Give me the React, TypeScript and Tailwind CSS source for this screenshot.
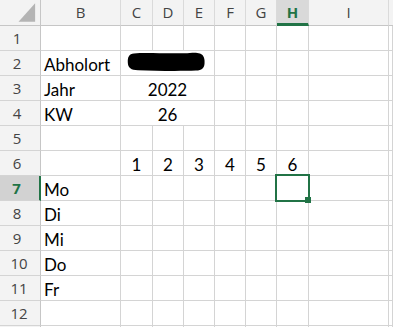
const cols = ["B", "C", "D", "E", "F", "G", "H", "I"];

const grid = "border-r border-b border-[#d4d4d4]";
const head = "border-r border-b border-[#dadada] bg-[#f3f3f3] text-[#444444]";

function RowHead({ n, active, hideLabel }: { n: number; active?: boolean; hideLabel?: boolean }) {
  return (
    <div
      className={`flex h-[25px] items-center justify-center border-b border-[#d4d4d4] font-['Open_Sans',sans-serif] text-[15px] leading-[24px] ${
        n < 10 ? "pr-[6px]" : "pr-[2px]"
      } ${
        active
          ? "border-r-2 border-r-[#217346] bg-[#d2d2d2] font-bold text-[#217346]"
          : "border-r border-r-[#c6c6c6] bg-[#f3f3f3] text-[#444444]"
      }`}
    >
      {hideLabel ? "" : n}
    </div>
  );
}

function Blank({ span }: { span?: number }) {
  return <div className={`${grid} ${span === 3 ? "col-span-3" : ""}`} />;
}

function Scribble() {
  return (
    <svg width="80" height="22" viewBox="0 0 80 22" className="ml-[5px]">
      <path
        d="M8 2.5 C20 1.5 40 2.8 58 2.2 C66 1.8 70 1 74 2.5 C78 4 79 8 78.5 13 C78 17 76 19.5 70 19.6 C55 20.2 30 20 12 19.2 C5 19 2 17 1.8 11.5 C1.6 6 3 3 8 2.5 Z"
        fill="#000"
      />
    </svg>
  );
}

export default function App() {
  const days = ["Mo", "Di", "Mi", "Do", "Fr"];

  return (
    <div className="relative h-[327px] w-[393px] overflow-hidden bg-white font-['Lato',sans-serif] text-[17px] leading-[28px] text-black">
      <div className="grid grid-cols-[41px_80px_32px_31px_31px_31px_31px_32px_80px_1fr] grid-rows-[26px_repeat(13,25px)]">
        {/* column headers */}
        <div className="flex border-r border-b border-[#c6c6c6] bg-[#f3f3f3]">
          <svg width="41" height="25" viewBox="0 0 41 25">
            <polygon points="36,3 36,22 19,22" fill="#b4b4b4" />
          </svg>
        </div>
        {cols.map((c) =>
          c === "H" ? (
            <div
              key={c}
              className="flex items-start justify-center border-r border-[#dadada] border-b-[3px] border-b-[#217346] bg-[#d9d9d9] font-['Open_Sans',sans-serif] text-[15px] font-bold leading-[25px] text-[#217346]"
            >
              {c}
            </div>
          ) : (
            <div
              key={c}
              className={`flex items-start justify-center ${head} border-b-[#c6c6c6] font-['Open_Sans',sans-serif] text-[15px] leading-[25px]`}
            >
              {c}
            </div>
          ),
        )}
        <div className="border-b border-[#c6c6c6] bg-[#f3f3f3]" />

        {/* row 1 */}
        <RowHead n={1} />
        {cols.map((c) => (
          <Blank key={c} />
        ))}
        <Blank />

        {/* row 2 */}
        <RowHead n={2} />
        <div className={`${grid} pl-[3px]`}>Abholort</div>
        <div className={`${grid} col-span-3 flex`}>
          <Scribble />
        </div>
        <Blank />
        <Blank />
        <Blank />
        <Blank />
        <Blank />

        {/* row 3 */}
        <RowHead n={3} />
        <div className={`${grid} pl-[3px]`}>Jahr</div>
        <div className={`${grid} col-span-3 text-center`}>2022</div>
        <Blank />
        <Blank />
        <Blank />
        <Blank />
        <Blank />

        {/* row 4 */}
        <RowHead n={4} />
        <div className={`${grid} pl-[3px]`}>KW</div>
        <div className={`${grid} col-span-3 text-center`}>26</div>
        <Blank />
        <Blank />
        <Blank />
        <Blank />
        <Blank />

        {/* row 5 */}
        <RowHead n={5} />
        {cols.map((c) => (
          <Blank key={c} />
        ))}
        <Blank />

        {/* row 6 */}
        <RowHead n={6} />
        <Blank />
        {[1, 2, 3, 4, 5, 6].map((n) => (
          <div key={n} className={`${grid} text-center`}>
            {n}
          </div>
        ))}
        <Blank />
        <Blank />

        {/* rows 7 - 11 */}
        {days.map((d, i) => (
          <Row key={d} n={7 + i} label={d} />
        ))}

        {/* row 12, and the top edge of row 13 */}
        <Row n={12} label="" />
        <Row n={13} label="" hideLabel />
      </div>

      {/* active cell H7 */}
      <div className="absolute left-[275px] top-[174px] h-[28px] w-[35px] border-2 border-[#217346]" />
      <div className="absolute left-[305px] top-[197px] h-[6px] w-[6px] bg-[#217346]" />
    </div>
  );
}

function Row({ n, label, hideLabel }: { n: number; label: string; hideLabel?: boolean }) {
  return (
    <>
      <RowHead n={n} active={n === 7} hideLabel={hideLabel} />
      <div className={`${grid} pl-[3px]`}>{label}</div>
      {cols.slice(1).map((c) => (
        <Blank key={c} />
      ))}
      <Blank />
    </>
  );
}
